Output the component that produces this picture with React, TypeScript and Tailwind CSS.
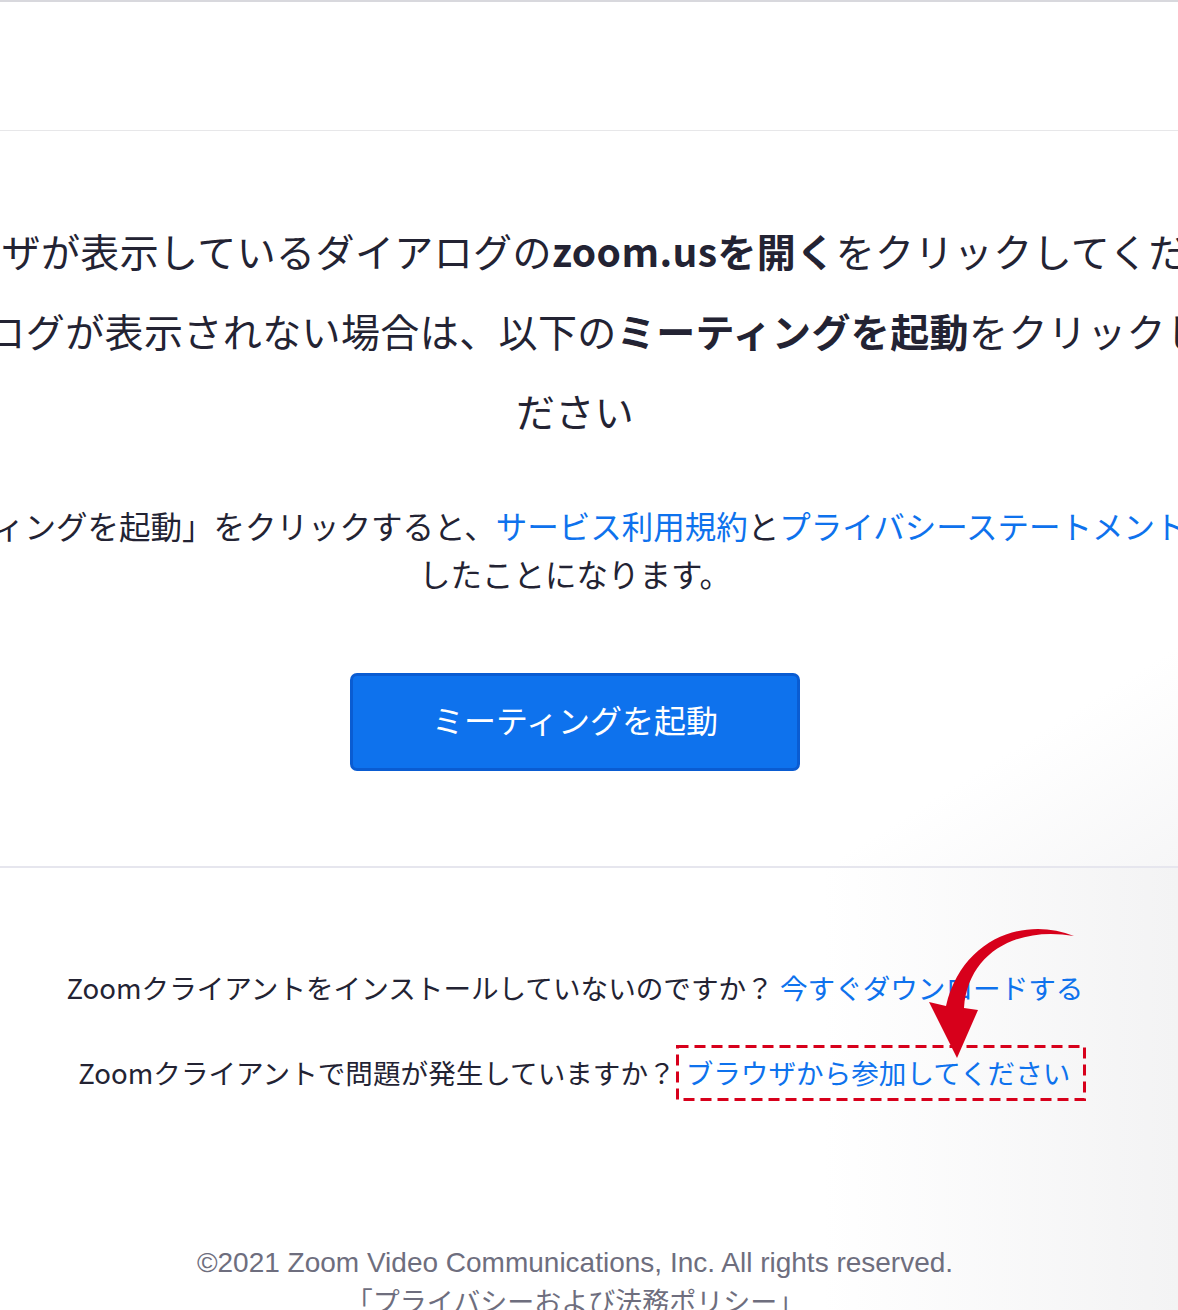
export default function App() {
  return (
    <div className="relative h-[1310px] w-full overflow-hidden bg-white font-['Noto_Sans_CJK_JP',sans-serif] text-[#232333]">
      {/* header */}
      <div className="h-[131px] border-t-2 border-b border-t-[#d8d8dd] border-b-[#e7e7e9]" />

      {/* main */}
      <div className="border-b-2 border-[#e6e6ee] bg-linear-to-br from-white from-85% to-[#f6f6f7]">
        <div className="flex w-[1150px] flex-col items-center pt-[79px] pb-[95px]">
          <div className="flex flex-col items-center text-[39px] leading-[80px] tracking-[0.4px]">
            <p className="whitespace-nowrap">
              ブラウザが表示しているダイアログの<b className="font-bold">zoom.usを開く</b>をクリックしてください
            </p>
            <p className="whitespace-nowrap">
              ダイアログが表示されない場合は、以下の<b className="font-bold">ミーティングを起動</b>をクリックしてく
            </p>
            <p className="whitespace-nowrap">ださい</p>
          </div>

          <div className="mt-[51px] flex flex-col items-center text-[31.5px] leading-[48px]">
            <p className="whitespace-nowrap">
              「ミーティングを起動」をクリックすると、<span className="text-[#0e72ed]">サービス利用規約</span>と
              <span className="text-[#0e72ed]">プライバシーステートメント</span>に同意
            </p>
            <p className="whitespace-nowrap">したことになります。</p>
          </div>

          <button className="mt-[76px] flex h-[98px] w-[450px] items-center justify-center rounded-[7px] border-[3px] border-[#0a5cd2] bg-[#0e72ed] pb-[6px] text-[32px] text-white">
            ミーティングを起動
          </button>
        </div>
      </div>

      {/* footer */}
      <div className="relative h-[444px] bg-linear-to-r from-white from-70% to-[#f3f3f4]">
        <div className="flex w-[1150px] flex-col items-center pt-[95px] text-[27.6px]">
          <p className="whitespace-nowrap leading-[48px]">
            Zoomクライアントをインストールしていないのですか？ <span className="text-[#0e72ed]">今すぐダウンロードする</span>
          </p>
          <div className="mt-[34px] ml-[14px] flex h-[56px] items-center whitespace-nowrap">
            <span>Zoomクライアントで問題が発生していますか？</span>
            <span className="relative flex h-[56px] w-[410px] items-center pl-[10px] text-[#0e72ed]">
              ブラウザから参加してください
              <svg className="absolute inset-0" width="410" height="56" viewBox="0 0 410 56">
                <rect
                  x="1.5"
                  y="1.5"
                  width="407"
                  height="53"
                  fill="none"
                  stroke="#d7001b"
                  strokeWidth="3"
                  strokeDasharray="11 6"
                />
              </svg>
            </span>
          </div>

          <p className="mt-[143px] whitespace-nowrap font-['Liberation_Sans','Noto_Sans_CJK_JP',sans-serif] text-[28px] leading-[38px] text-[#6e6e7e]">
            ©2021 Zoom Video Communications, Inc. All rights reserved.
          </p>
          <p className="whitespace-nowrap text-[27px] leading-[38px] text-[#6e6e7e]">「プライバシーおよび法務ポリシー」</p>
        </div>

        {/* red curved arrow */}
        <svg className="absolute left-[900px] top-[52px]" width="190" height="150" viewBox="0 0 190 150">
          <path
            d="M174 16 C125 -4, 62 18, 46 86 L29 82 L57 138 L78 90 L64 88 C68 32, 118 6, 174 16 Z"
            fill="#d7001b"
          />
        </svg>
      </div>
    </div>
  )
}
